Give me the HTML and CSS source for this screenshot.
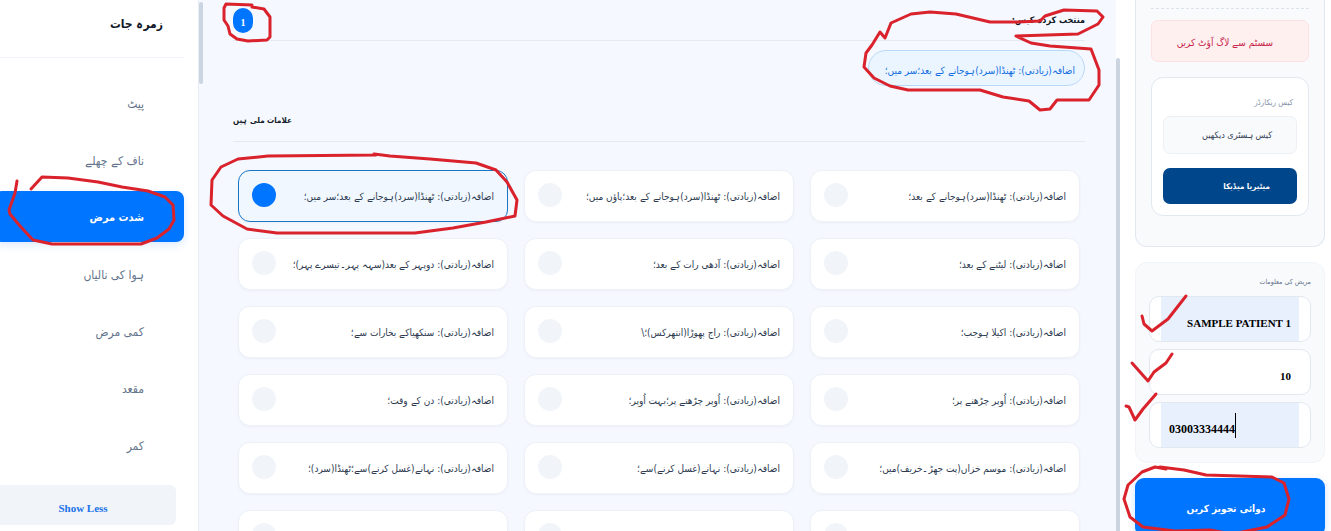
FILE: index.html
```html
<!DOCTYPE html>
<html lang="ur" dir="rtl">
<head>
<meta charset="utf-8">
<meta name="viewport" content="width=device-width, initial-scale=1">
<title>علامات</title>
<link rel="stylesheet" href="styles.css">
</head>
<body>
<div class="app">
  <aside class="panel">
    <span class="scroll-thumb panel-thumb"></span>
    <section class="account">
      <button class="btn btn-logout" type="button">سسٹم سے لاگ آؤٹ کریں</button>
      <div class="records">
        <h3 class="records-title">کیس ریکارڈز</h3>
        <button class="btn btn-history" type="button">کیس ہسٹری دیکھیں</button>
        <button class="btn btn-medica" type="button">میٹیریا میڈیکا</button>
      </div>
    </section>
    <form class="patient">
      <h3 class="patient-title">مریض کی معلومات</h3>
      <div class="field filled"><input type="text" aria-label="نام" value="SAMPLE PATIENT 1"></div>
      <div class="field"><input type="text" aria-label="عمر" value="10"></div>
      <div class="field filled phone"><input type="text" dir="ltr" aria-label="فون" value="03003334444"><span class="caret"></span></div>
    </form>
    <button class="btn btn-suggest" type="button">دوائی تجویز کریں</button>
  </aside>

  <main class="main">
    <span class="scroll-thumb main-thumb"></span>
    <header class="selected-head">
      <h2 class="selected-title">منتخب کردہ کیس:</h2>
      <span class="badge">1</span>
    </header>
    <div class="chips"><button class="chip" type="button">اضافہ(زیادتی): ٹھنڈا(سرد)ہوجانے کے بعد؛سر میں؛</button></div>
    <h2 class="found">علامات ملی ہیں</h2>
    <div class="grid">
      <label class="card"><span>اضافہ(زیادتی): ٹھنڈا(سرد)ہوجانے کے بعد؛</span><input type="checkbox"></label>
      <label class="card"><span>اضافہ(زیادتی): ٹھنڈا(سرد)ہوجانے کے بعد؛پاؤں میں؛</span><input type="checkbox"></label>
      <label class="card active"><span>اضافہ(زیادتی): ٹھنڈا(سرد)ہوجانے کے بعد؛سر میں؛</span><input type="checkbox" checked></label>
      <label class="card"><span>اضافہ(زیادتی): لیٹنے کے بعد؛</span><input type="checkbox"></label>
      <label class="card"><span>اضافہ(زیادتی): آدھی رات کے بعد؛</span><input type="checkbox"></label>
      <label class="card"><span>اضافہ(زیادتی): دوپہر کے بعد(سہہ پہر۔تیسرے پہر)؛</span><input type="checkbox"></label>
      <label class="card"><span>اضافہ(زیادتی): اکیلا ہوجب؛</span><input type="checkbox"></label>
      <label class="card"><span>اضافہ(زیادتی): راج پھوڑا(انتھرکس)؛\</span><input type="checkbox"></label>
      <label class="card"><span>اضافہ(زیادتی): سنکھیاکے بخارات سے؛</span><input type="checkbox"></label>
      <label class="card"><span>اضافہ(زیادتی): اُوپر چڑھنے پر؛</span><input type="checkbox"></label>
      <label class="card"><span>اضافہ(زیادتی): اُوپر چڑھنے پر؛بہت اُوپر؛</span><input type="checkbox"></label>
      <label class="card"><span>اضافہ(زیادتی): دن کے وقت؛</span><input type="checkbox"></label>
      <label class="card"><span>اضافہ(زیادتی): موسم خزاں(پت جھڑ۔خریف)میں؛</span><input type="checkbox"></label>
      <label class="card"><span>اضافہ(زیادتی): نہانے(غسل کرنے)سے؛</span><input type="checkbox"></label>
      <label class="card"><span>اضافہ(زیادتی): نہانے(غسل کرنے)سے؛ٹھنڈا(سرد)؛</span><input type="checkbox"></label>
      <label class="card"><span>اضافہ(زیادتی): نہانے(غسل کے بعد)؛</span><input type="checkbox"></label>
      <label class="card"><span>اضافہ(زیادتی): نہانے(غسل)؛</span><input type="checkbox"></label>
      <label class="card"><span>اضافہ(زیادتی): نہانے(غسل)سے؛سمندر کے؛</span><input type="checkbox"></label>
    </div>
  </main>

  <nav class="sidebar">
    <h2 class="sidebar-title">زمرہ جات</h2>
    <div class="cats">
      <button class="cat" type="button">پیٹ</button>
      <button class="cat" type="button">ناف کے چھلے</button>
      <button class="cat current" type="button">شدت مرض</button>
      <button class="cat" type="button">ہوا کی نالیاں</button>
      <button class="cat" type="button">کمی مرض</button>
      <button class="cat" type="button">مقعد</button>
      <button class="cat" type="button">کمر</button>
    </div>
    <div class="more"><button class="show-less" type="button">Show Less</button></div>
  </nav>
</div>

<svg class="ink" width="1331" height="531" viewBox="0 0 1331 531" aria-hidden="true">
  <path d="M252 5 L226 4 L224 8 L224 20 L228 26 L230 34 L237 39 L248 41 L267 40 L270 37 L270 17 L264 9 L252 7"/>
  <path d="M17 181 L15 193 L9 210 L10 214 L20 226 L33 240 L52 244 L141 244 L157 238 L169 229 L174 220 L173 205 L165 197 L148 191 L122 187 L98 182 L68 178 L42 177 L31 189"/>
  <path d="M376 155 L268 156 L238 159 L221 167 L212 180 L211 205 L223 216 L247 229 L277 233 L415 233 L453 228 L486 222 L515 216 L517 200 L507 182 L496 170 L476 163 L430 159 L390 156 L374 154"/>
  <path d="M1018 22 L990 22 L956 14 L930 12 L911 14 L891 23 L885 38 L880 32 L872 45 L866 53 L864 67 L874 78 L890 86 L908 90 L980 90 L1003 97 L1029 101 L1040 110 L1050 109 L1057 100 L1089 100 L1099 85 L1099 70 L1091 49 L1050 46 L1031 43 L1016 36 L1078 34 L1098 24 L1103 17 L1097 11 L1064 10 L1045 16 L1040 21 L1018 22"/>
  <path d="M1142 316 L1144 324 L1152 331 L1168 319 L1186 296"/>
  <path d="M1132 363 L1148 381 L1154 372 L1166 363 L1172 354"/>
  <path d="M1126 406 L1129 407 L1135 420 L1143 409 L1156 394"/>
  <path d="M1166 469 L1155 467 L1142 472 L1128 485 L1124 499 L1130 517 L1143 527 L1175 531 L1210 530 L1232 534 L1267 527 L1285 515 L1289 499 L1284 483 L1272 477 L1206 475 L1184 470 L1160 467"/>
</svg>
</body>
</html>
```
FILE: styles.css
```css
* { box-sizing: border-box; }

body {
  margin: 0;
  overflow: hidden;
  background: #fff;
  color: #111827;
  font-family: "DejaVu Sans Condensed", "DejaVu Sans", sans-serif;
}

h2, h3 { margin: 0; }

button, input { font: inherit; }

button { cursor: pointer; }

.app {
  display: flex;
  height: 100vh;
  overflow: hidden;
}

.scroll-thumb {
  position: absolute;
  left: 0;
  width: 4px;
  border-radius: 2px;
  background: #cbd5e1;
}

/* Patient panel */
.panel {
  position: relative;
  flex: 0 0 215px;
  padding: 0 6px 0 19px;
}

.panel-thumb { top: 58px; bottom: -4px; }

.account {
  padding: 8px 15px 30px;
  border: 1px solid #e2e8f0;
  border-top: 0;
  border-radius: 0 0 12px 12px;
  background: #f8fafc;
}

.account::before {
  content: "";
  display: block;
  margin-bottom: 11px;
  border-top: 1px dashed #dbe2ea;
}

.btn {
  display: block;
  width: 100%;
  border: 1px solid transparent;
  border-radius: 7px;
  text-align: right;
  white-space: nowrap;
}

.btn-logout {
  height: 42px;
  padding: 2px 35px 0 0;
  border-color: #ffe0e3;
  background: #fff0f0;
  color: #c81e4a;
  font-size: 10px;
}

.records {
  margin-top: 15px;
  padding: 11px;
  border: 1px solid #e2e8f0;
  border-radius: 12px;
  background: #fff;
}

.records-title {
  padding: 0 4px;
  color: #8592a6;
  font-size: 8px;
  font-weight: 400;
  line-height: 27px;
}

.btn-history {
  height: 38px;
  padding: 0 24px 0 0;
  border-color: #edf1f5;
  background: #f8fafc;
  color: #334155;
  font-size: 9px;
}

.btn-medica {
  height: 36px;
  margin-top: 14px;
  padding: 0 26px 0 0;
  background: #00468b;
  color: #fff;
  font-size: 8px;
  font-weight: 700;
}

.patient {
  display: grid;
  gap: 7px;
  margin-top: 15px;
  padding: 13px 13px 14px;
  border: 1px solid #f1f5f9;
  border-radius: 12px;
  background: #f8fafc;
}

.patient-title {
  color: #64748b;
  font-size: 7px;
  font-weight: 400;
  line-height: 13px;
}

.field {
  position: relative;
  height: 46px;
  padding: 0 11px;
  border: 1px solid #e2e8f0;
  border-radius: 10px;
  background: #fff;
}

.field input {
  display: block;
  width: 100%;
  height: 100%;
  padding: 8px 8px 0;
  border: 0;
  outline: 0;
  background: none;
  color: #000;
  font-family: "Liberation Serif", serif;
  font-size: 11px;
  font-weight: 700;
}

.filled input { background: #e8f0fe; }

.phone input { font-size: 12px; }

.caret {
  position: absolute;
  top: 10px;
  left: 85px;
  width: 1px;
  height: 25px;
  background: #000;
}

.btn-suggest {
  height: 58px;
  margin-top: 15px;
  padding: 2px 8px 0 0;
  border-radius: 9px;
  background: #0075ff;
  box-shadow: 0 3px 8px #0075ff33;
  color: #fff;
  font-size: 10px;
  font-weight: 700;
  text-align: center;
}

/* Symptoms */
.main {
  position: relative;
  flex: 1;
  min-width: 0;
  padding: 0 31px 0 34px;
  background: #f5f8ff;
}

.main-thumb { top: 2px; height: 82px; }

.selected-head {
  display: flex;
  align-items: center;
  justify-content: space-between;
  height: 41px;
  border-bottom: 1px solid #e5eaf1;
}

.selected-title { font-size: 9px; }

.badge {
  width: 20px;
  height: 25px;
  border-radius: 10px;
  background: #0075ff;
  color: #fff;
  font-family: "Liberation Serif", serif;
  font-size: 10px;
  font-weight: 700;
  line-height: 30px;
  text-align: center;
}

.chips { display: flex; padding-top: 9px; }

.chip {
  height: 36px;
  padding: 4px 9px 0 16px;
  border: 1px solid #b9d8f8;
  border-radius: 18px;
  background: #ebf5ff;
  color: #126de0;
  font-size: 10px;
}

.found {
  margin-top: 14px;
  border-bottom: 1px solid #e5eaf1;
  font-size: 8px;
  line-height: 41px;
  text-align: left;
}

.grid {
  display: grid;
  grid-template-columns: repeat(3, 1fr);
  gap: 16px;
  padding: 28px 5px;
}

.card {
  display: flex;
  align-items: center;
  justify-content: space-between;
  height: 52px;
  padding: 0 13px;
  border: 1px solid #eef2f8;
  border-radius: 12px;
  background: #fff;
  box-shadow: 0 1px 3px #0f172a0a;
  color: #2d3a50;
  font-size: 10px;
  white-space: nowrap;
}

.card input {
  width: 24px;
  height: 24px;
  margin: 0 0 2px;
  border-radius: 50%;
  appearance: none;
  background: #f1f5f9;
}

.card.active { border-color: #1976c5; background: #f0f7ff; }

.card input:checked { background: #0075ff; }

/* Categories */
.sidebar {
  flex: 0 0 199px;
  min-width: 0;
  padding-right: 15px;
  box-shadow: inset -1px 0 #e8edf3;
}

.sidebar-title {
  height: 58px;
  padding-right: 21px;
  border-bottom: 1px solid #f1f4f8;
  font-size: 12px;
  line-height: 48px;
}

.cats {
  display: grid;
  gap: 6px;
  margin-left: -6px;
  padding-top: 19px;
}

.cat {
  height: 51px;
  padding: 2px 40px 0 0;
  border: 0;
  border-radius: 8px;
  background: none;
  color: #64748b;
  font-size: 12px;
  text-align: right;
}

.current {
  background: #0075ff;
  box-shadow: 0 3px 8px #0075ff26;
  color: #fff;
  font-size: 11px;
  font-weight: 700;
}

.more { margin: 15px 8px 0 -10px; }

.show-less {
  width: 100%;
  height: 40px;
  padding: 6px 0 0;
  border: 0;
  border-radius: 6px;
  background: #f1f4f9;
  color: #1a73e8;
  font-family: "Liberation Serif", serif;
  font-size: 11px;
  font-weight: 700;
}

/* Pen marks over the page */
.ink {
  position: absolute;
  top: 0;
  left: 0;
  fill: none;
  stroke: #d9222c;
  stroke-width: 3;
  stroke-linecap: round;
  stroke-linejoin: round;
  pointer-events: none;
}
```
